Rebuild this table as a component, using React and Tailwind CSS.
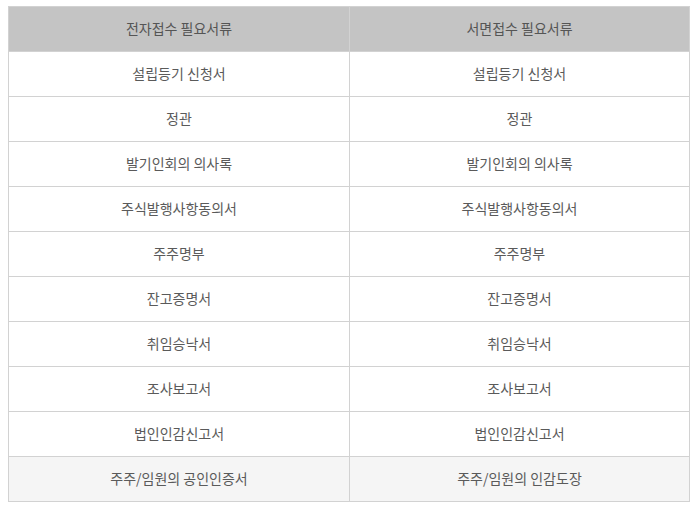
const rows = [
  ["설립등기 신청서", "설립등기 신청서"],
  ["정관", "정관"],
  ["발기인회의 의사록", "발기인회의 의사록"],
  ["주식발행사항동의서", "주식발행사항동의서"],
  ["주주명부", "주주명부"],
  ["잔고증명서", "잔고증명서"],
  ["취임승낙서", "취임승낙서"],
  ["조사보고서", "조사보고서"],
  ["법인인감신고서", "법인인감신고서"],
];

export default function App() {
  return (
    <div className="w-[699px] h-[509px] bg-white pt-[6px] pl-[8px] font-['Noto_Sans_CJK_KR','Noto_Sans',sans-serif] text-[14px] text-[#5a5a5a]">
      <table className="w-[682px] border-collapse table-fixed">
        <thead>
          <tr className="h-[45px] bg-[#c4c4c4]">
            <th className="border border-[#d2d2d2] font-normal text-[#555] w-[341px] pb-[2px]">
              전자접수 필요서류
            </th>
            <th className="border border-[#d2d2d2] font-normal text-[#555] pb-[2px]">
              서면접수 필요서류
            </th>
          </tr>
        </thead>
        <tbody>
          {rows.map(([a, b], i) => (
            <tr key={i} className="h-[45px]">
              <td className="border border-[#d2d2d2] text-center pb-[2px]">{a}</td>
              <td className="border border-[#d2d2d2] text-center pb-[2px]">{b}</td>
            </tr>
          ))}
          <tr className="h-[45px] bg-[#f5f5f5]">
            <td className="border border-[#d2d2d2] text-center pb-[2px]">주주/임원의 공인인증서</td>
            <td className="border border-[#d2d2d2] text-center pb-[2px]">주주/임원의 인감도장</td>
          </tr>
        </tbody>
      </table>
    </div>
  );
}
